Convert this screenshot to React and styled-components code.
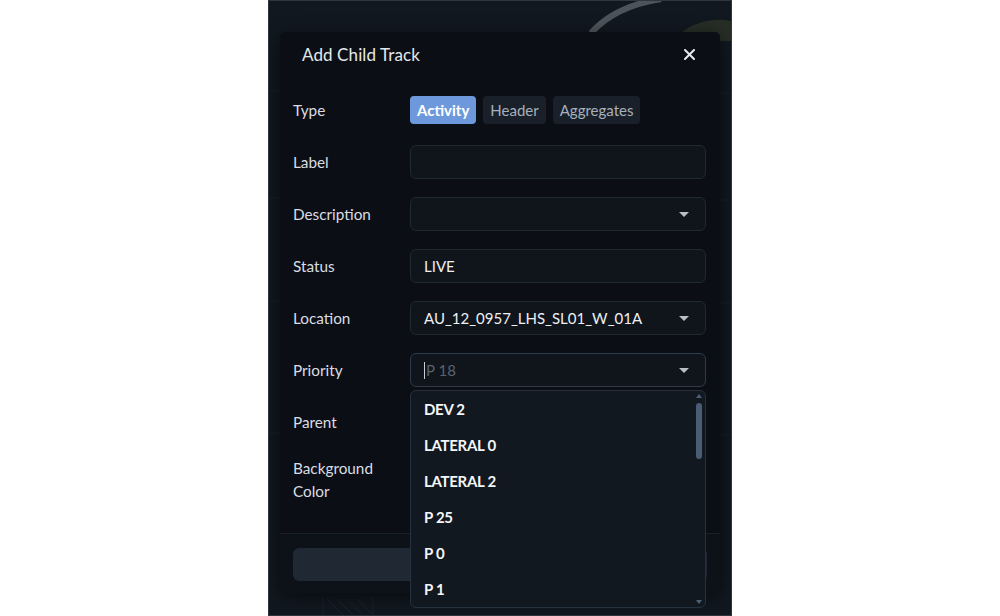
import React from 'react';
import styled, { createGlobalStyle } from 'styled-components';

const GlobalStyle = createGlobalStyle`
  html, body {
    margin: 0;
    padding: 0;
    background: #ffffff;
  }
  body {
    font-family: Lato, "Noto Sans", "Liberation Sans", sans-serif;
  }
`;

const Screen = styled.div`
  position: relative;
  width: 462px;
  height: 614px;
  margin: 0 auto;
  border: 1px solid #30363d;
  background: #111820;
  overflow: hidden;
`;

const MapLayer = styled.svg`
  position: absolute;
  inset: 0;
  width: 100%;
  height: 100%;
`;

const Modal = styled.div`
  position: absolute;
  top: 31px;
  left: 11px;
  width: 440px;
  height: 561px;
  display: flex;
  flex-direction: column;
  background: #0b0f15;
  border-radius: 5px;
  box-shadow: 0 4px 18px rgba(0, 0, 0, 0.55);
`;

const ModalHeader = styled.div`
  display: flex;
  align-items: center;
  justify-content: space-between;
  height: 45px;
  padding: 0 23px 0 22px;
`;

const Title = styled.h2`
  margin: 0;
  font-size: 17px;
  font-weight: 400;
  color: #e4e7eb;
  letter-spacing: 0.1px;
`;

const CloseButton = styled.button`
  display: flex;
  align-items: center;
  justify-content: center;
  width: 16px;
  height: 16px;
  padding: 0;
  border: none;
  background: transparent;
  color: #e8eaee;
  cursor: pointer;
`;

const Body = styled.div`
  flex: 1;
  display: flex;
  flex-direction: column;
  gap: 18px;
  padding: 16px 14px 0 13px;
`;

const Row = styled.div`
  display: grid;
  grid-template-columns: 117px 1fr;
  align-items: ${p => (p.$top ? 'start' : 'center')};
  min-height: 34px;
`;

const Label = styled.label`
  font-size: 15.3px;
  line-height: 23px;
  color: #d9dde3;
`;

const Segmented = styled.div`
  display: flex;
  gap: 7px;
`;

const Segment = styled.button`
  height: 28px;
  padding: 0 7px;
  border: none;
  border-radius: 4px;
  font-family: inherit;
  font-size: 15px;
  background: ${p => (p.$active ? '#6d99dc' : '#19202a')};
  color: ${p => (p.$active ? '#ffffff' : '#a7b0bb')};
  font-weight: ${p => (p.$active ? 700 : 400)};
`;

const Field = styled.div`
  position: relative;
  display: flex;
  align-items: center;
  height: 34px;
  box-sizing: border-box;
  padding: 0 13px;
  border: 1px solid ${p => (p.$focus ? '#2d3b4d' : '#202832')};
  border-radius: 6px;
  background: #10151c;
  font-size: 15px;
  color: #eef0f3;
`;

const Value = styled.span`
  flex: 1;
  white-space: nowrap;
`;

const Placeholder = styled.span`
  flex: 1;
  color: #59626e;
  display: flex;
  align-items: center;
`;

const Caret = styled.span`
  width: 1px;
  height: 17px;
  margin-right: 1px;
  background: #c9ced5;
`;

const Chevron = styled.span`
  width: 0;
  height: 0;
  margin-right: 3px;
  border-left: 5px solid transparent;
  border-right: 5px solid transparent;
  border-top: 5px solid #b7bec8;
`;

const Menu = styled.div`
  position: absolute;
  top: 36px;
  left: -1px;
  right: -1px;
  z-index: 5;
  height: 218px;
  box-sizing: border-box;
  border: 1px solid #26313f;
  border-radius: 6px;
  background: #121820;
  overflow: hidden;
`;

const Option = styled.div`
  height: 36px;
  display: flex;
  align-items: center;
  padding: 0 13px;
  font-size: 15px;
  font-weight: 700;
  color: #f4f6f8;
  letter-spacing: -0.3px;
`;

const ScrollTrack = styled.div`
  position: absolute;
  top: 3px;
  bottom: 3px;
  right: 3px;
  width: 6px;
  display: flex;
  flex-direction: column;
  align-items: center;
  justify-content: space-between;
`;

const ScrollArrow = styled.span`
  width: 0;
  height: 0;
  border-left: 3px solid transparent;
  border-right: 3px solid transparent;
  ${p => (p.$down ? 'border-top: 4px solid #4d5e77;' : 'border-bottom: 4px solid #4d5e77;')}
`;

const ScrollThumb = styled.span`
  position: absolute;
  top: 9px;
  left: 0;
  width: 6px;
  height: 56px;
  border-radius: 3px;
  background: #4a5b74;
`;

const Footer = styled.div`
  display: flex;
  padding: 14px 13px 12px;
  border-top: 1px solid #1a2029;
  background: #0d1118;
  border-radius: 0 0 5px 5px;
`;

const SubmitButton = styled.button`
  flex: 1;
  height: 33px;
  border: none;
  border-radius: 6px;
  background: #1f2833;
`;

const priorities = ['DEV 2', 'LATERAL 0', 'LATERAL 2', 'P 25', 'P 0', 'P 1'];

function Select({ value, children, focus }) {
  return (
    <Field $focus={focus}>
      {value}
      <Chevron />
      {children}
    </Field>
  );
}

export default function App() {
  return (
    <>
      <GlobalStyle />
      <Screen>
        <MapLayer viewBox="0 0 462 614" preserveAspectRatio="none">
          <g stroke="#1a222b" strokeWidth="1">
            <line x1="0" y1="90" x2="462" y2="92" />
            <line x1="0" y1="197" x2="462" y2="199" />
            <line x1="0" y1="300" x2="462" y2="302" />
            <line x1="0" y1="432" x2="462" y2="434" />
          </g>
          <path d="M322 32 C 338 14, 360 3, 392 -2" stroke="#5c636a" strokeWidth="6" fill="none" opacity="0.8" />
          <path d="M412 32 C 424 22, 444 16, 462 20 L 462 40 L 412 40 Z" fill="#30372a" opacity="0.7" />
          <g stroke="#1c232c" strokeWidth="1">
            <line x1="54" y1="596" x2="54" y2="614" />
            <line x1="104" y1="596" x2="104" y2="614" />
            <line x1="58" y1="598" x2="74" y2="614" />
            <line x1="68" y1="598" x2="84" y2="614" />
            <line x1="78" y1="598" x2="94" y2="614" />
            <line x1="88" y1="598" x2="104" y2="614" />
          </g>
        </MapLayer>

        <Modal>
          <ModalHeader>
            <Title>Add Child Track</Title>
            <CloseButton aria-label="Close">
              <svg width="11" height="11" viewBox="0 0 11 11">
                <path d="M1 1 L10 10 M10 1 L1 10" stroke="currentColor" strokeWidth="2" strokeLinecap="round" />
              </svg>
            </CloseButton>
          </ModalHeader>

          <Body>
            <Row>
              <Label>Type</Label>
              <Segmented>
                <Segment $active>Activity</Segment>
                <Segment>Header</Segment>
                <Segment>Aggregates</Segment>
              </Segmented>
            </Row>
            <Row>
              <Label>Label</Label>
              <Field />
            </Row>
            <Row>
              <Label>Description</Label>
              <Select value={<Value />} />
            </Row>
            <Row>
              <Label>Status</Label>
              <Field>
                <Value>LIVE</Value>
              </Field>
            </Row>
            <Row>
              <Label>Location</Label>
              <Select value={<Value>AU_12_0957_LHS_SL01_W_01A</Value>} />
            </Row>
            <Row>
              <Label>Priority</Label>
              <Select
                focus
                value={
                  <Placeholder>
                    <Caret />P 18
                  </Placeholder>
                }
              >
                <Menu>
                  {priorities.map(p => (
                    <Option key={p}>{p}</Option>
                  ))}
                  <ScrollTrack>
                    <ScrollArrow />
                    <ScrollThumb />
                    <ScrollArrow $down />
                  </ScrollTrack>
                </Menu>
              </Select>
            </Row>
            <Row>
              <Label>Parent</Label>
              <Field />
            </Row>
            <Row $top>
              <Label>
                Background
                <br />
                Color
              </Label>
            </Row>
          </Body>

          <Footer>
            <SubmitButton />
          </Footer>
        </Modal>
      </Screen>
    </>
  );
}
